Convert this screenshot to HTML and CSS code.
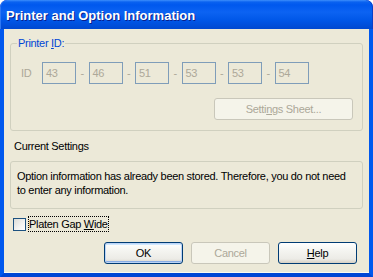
FILE: index.html
```html
<!DOCTYPE html>
<html>
<head>
<meta charset="utf-8">
<link rel="stylesheet" href="styles.css">
</head>
<body>
<div class="window">
  <div class="titlebar"><span class="title">Printer and Option Information</span></div>
  <div class="client">
    <fieldset class="group">
      <legend>Printer <u>I</u>D:</legend>
      <div class="idrow">
        <span class="idlabel">ID</span>
        <span class="box">43</span><span class="dash">-</span>
        <span class="box">46</span><span class="dash">-</span>
        <span class="box">51</span><span class="dash">-</span>
        <span class="box">53</span><span class="dash">-</span>
        <span class="box">53</span><span class="dash">-</span>
        <span class="box">54</span>
      </div>
      <div class="group-actions">
        <button class="btn disabled sheet">Setti<u>n</u>gs Sheet...</button>
      </div>
    </fieldset>
    <div class="section-label">Current Settings</div>
    <div class="infobox">Option information has already been stored. Therefore, you do not need to enter any information.</div>
    <label class="check"><span class="cb"></span><span class="focus">Platen Gap <u>W</u>ide</span></label>
    <div class="buttons">
      <button class="btn default">OK</button>
      <button class="btn disabled">Cancel</button>
      <button class="btn"><u>H</u>elp</button>
    </div>
  </div>
</div>
</body>
</html>
```

FILE: styles.css
```css
html, body {
  margin: 0;
  padding: 0;
  background: #ffffff;
}
body {
  font-family: "Liberation Sans", Arial, sans-serif;
  font-size: 11px;
  line-height: 13px;
  letter-spacing: -0.3px;
  color: #000;
}
.window {
  width: 373px;
  height: 277px;
  display: flex;
  flex-direction: column;
  background: #0831d9;
  border-radius: 7px 7px 0 0;
  overflow: hidden;
}
.titlebar {
  height: 29px;
  flex: none;
  display: flex;
  align-items: center;
  padding-left: 6px;
  background: linear-gradient(#3d8ffb 0px, #0a62f0 2px, #0058ee 5px, #0c63f2 12px, #0057e8 20px, #0048d0 29px);
  border-radius: 7px 7px 0 0;
  box-shadow: inset 1px 0 0 #2f78f3, inset -1px 0 0 #0a3fc8;
}
.title {
  color: #fff;
  font-family: "Liberation Sans", Arial, sans-serif;
  font-weight: bold;
  font-size: 13px;
  letter-spacing: 0;
  text-shadow: 1px 1px 0 #0a1e8c;
  padding-top: 1px;
}
.client {
  flex: 1;
  display: flex;
  flex-direction: column;
  background: #ece9d8;
  border-left: 4px solid #0058ee;
  border-right: 4px solid #0058ee;
  border-bottom: 4px solid #0046d5;
  box-shadow: inset 0 -1px 0 #fbfbf2;
  padding: 8px 6px 0 6px;
}
.group {
  margin: 0;
  padding: 12px 9px 10px 10px;
  border: 1px solid #d0d0bf;
  border-radius: 3px;
  min-width: 0;
}
.group legend {
  color: #0046d5;
  padding: 0 1px;
  margin-left: -4px;
  line-height: 13px;
}
.idrow {
  display: flex;
  align-items: center;
}
.idlabel {
  color: #aca899;
  width: 21px;
}
.box {
  box-sizing: border-box;
  width: 34px;
  height: 22px;
  border: 1px solid #7f9db9;
  color: #aca899;
  padding: 3px 3px 0;
  line-height: 14px;
}
.dash {
  width: 12.5px;
  text-align: center;
  color: #aca899;
}
.group-actions {
  display: flex;
  justify-content: flex-end;
  margin-top: 14px;
}
.btn {
  box-sizing: border-box;
  width: 79px;
  height: 22px;
  font-family: "Liberation Sans", Arial, sans-serif;
  font-size: 11px;
  letter-spacing: -0.3px;
  color: #000;
  border: 1px solid #003c74;
  border-radius: 3px;
  background: linear-gradient(#ffffff 0%, #f4f4f0 40%, #ecebe6 80%, #d6d0c5 100%);
  padding: 0;
  margin: 0;
}
.btn.default {
  box-shadow: inset 0 0 0 1px #bcd4f6, inset 0 -2px 0 #89ade4, inset 0 2px 0 #cee7ff;
}
.btn.disabled {
  border-color: #c9c7ba;
  background: #f5f4ea;
  color: #aca899;
}
.btn.sheet {
  width: 139px;
}
.section-label {
  margin: 9px 0 0 4px;
}
.infobox {
  margin-top: 8px;
  border: 1px solid #d0d0bf;
  border-radius: 3px;
  padding: 7px 6px 11px 6px;
  line-height: 14px;
}
.check {
  display: flex;
  align-items: center;
  height: 16px;
  margin: 7px 0 0 3px;
}
.cb {
  box-sizing: border-box;
  width: 13px;
  height: 13px;
  border: 1px solid #1c5180;
  background: linear-gradient(135deg, #dcdcd7 0%, #f4f4f2 60%, #ffffff 100%);
}
.focus {
  margin-left: 2px;
  padding: 1px 1px 1px 1px;
  outline: 1px dotted #000;
  outline-offset: -1px;
  line-height: 14px;
}
.buttons {
  display: flex;
  justify-content: flex-end;
  gap: 8px;
  margin: 10px 6px 0 0;
}
```
